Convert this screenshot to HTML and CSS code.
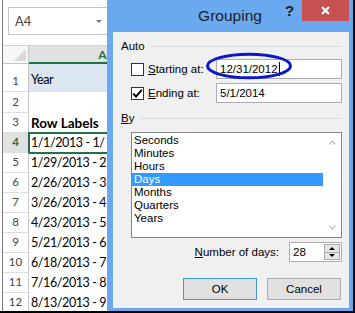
FILE: index.html
```html
<!DOCTYPE html>
<html>
<head>
<meta charset="utf-8">
<link rel="stylesheet" href="styles.css">
</head>
<body>
<div class="screen">
  <div class="sheet">
    <div class="namebar">
      <div class="namebox"><span class="nb-text">A4</span><span class="nb-arrow"></span></div>
    </div>
    <div class="grid">
      <div class="corner"><span class="tri"></span></div>
      <div class="colhead active">A</div>

      <div class="rowhead">1</div><div class="cell blue tall">Year</div>
      <div class="rowhead">2</div><div class="cell"></div>
      <div class="rowhead">3</div><div class="cell bold">Row Labels</div>
      <div class="rowhead active">4</div><div class="cell selected">1/1/2013 - 1/</div>
      <div class="rowhead">5</div><div class="cell">1/29/2013 - 2</div>
      <div class="rowhead">6</div><div class="cell">2/26/2013 - 3</div>
      <div class="rowhead">7</div><div class="cell">3/26/2013 - 4</div>
      <div class="rowhead">8</div><div class="cell">4/23/2013 - 5</div>
      <div class="rowhead">9</div><div class="cell">5/21/2013 - 6</div>
      <div class="rowhead">10</div><div class="cell">6/18/2013 - 7</div>
      <div class="rowhead">11</div><div class="cell">7/16/2013 - 8</div>
      <div class="rowhead">12</div><div class="cell">8/13/2013 - 9</div>
    </div>
  </div>

  <div class="dialog">
    <div class="titlebar">
      <span class="title">Grouping</span>
      <span class="help">?</span>
      <span class="close"><svg width="9" height="9" viewBox="0 0 9 9"><path d="M1 1 L8 8 M8 1 L1 8" stroke="#fff" stroke-width="2.2" fill="none"/></svg></span>
    </div>
    <div class="panel">
      <div class="legend"><span>Auto</span><i class="rule"></i></div>
      <div class="field first">
        <span class="chk"></span>
        <span class="lbl"><u>S</u>tarting at:</span>
        <div class="input">12/31/2012<i class="caret"></i></div>
      </div>
      <div class="field">
        <span class="chk"><svg width="11" height="11" viewBox="0 0 11 11"><path d="M1.2 5.6 L4 8.6 L9.8 1.8" stroke="#000" stroke-width="2" fill="none"/></svg></span>
        <span class="lbl"><u>E</u>nding at:</span>
        <div class="input">5/1/2014</div>
      </div>
      <div class="legend by"><span><u>B</u>y</span><i class="rule"></i></div>
      <div class="listbox">
        <ul class="items">
          <li>Seconds</li>
          <li>Minutes</li>
          <li>Hours</li>
          <li class="sel">Days</li>
          <li>Months</li>
          <li>Quarters</li>
          <li>Years</li>
        </ul>
        <div class="vscroll">
          <svg width="7" height="5" viewBox="0 0 7 5"><path d="M0.5 4.5 L3.5 1 L6.5 4.5" stroke="#c2c2c2" stroke-width="1.3" fill="none"/></svg>
          <svg width="7" height="5" viewBox="0 0 7 5"><path d="M0.5 0.5 L3.5 4 L6.5 0.5" stroke="#c2c2c2" stroke-width="1.3" fill="none"/></svg>
        </div>
      </div>
      <div class="numrow">
        <span class="lbl2"><u>N</u>umber of days:</span>
        <div class="spin">
          <span class="spin-val">28</span>
          <div class="spin-btns">
            <span class="sb"><i class="arr-up"></i></span>
            <span class="sb lower"><i class="arr-down"></i></span>
          </div>
        </div>
      </div>
      <div class="buttons">
        <button class="btn default">OK</button>
        <button class="btn">Cancel</button>
      </div>
      <svg class="ellipse" width="88" height="28" viewBox="0 0 88 28"><ellipse cx="44" cy="14" rx="41.5" ry="11.8" stroke="#0b17c9" stroke-width="3" fill="none"/></svg>
    </div>
  </div>
</div>
</body>
</html>
```

FILE: styles.css
```css
* { box-sizing: border-box; margin: 0; padding: 0; }
body { width: 355px; height: 313px; overflow: hidden; background: #fff; font-family: Lato, "Noto Sans", sans-serif; color: #000; }
.screen { position: relative; width: 355px; height: 313px; border-right: 2px solid #000; border-bottom: 2px solid #000; overflow: hidden; }

/* spreadsheet */
.sheet { margin-left: 2px; width: 106px; border-left: 1px solid #7a7a7a; height: 311px; }
.namebar { height: 45px; padding: 7px 0 0 5px; }
.namebox { width: 101px; height: 28px; border: 1px solid #c6c6c6; display: flex; align-items: center; padding-left: 6px; }
.nb-text { font-size: 13px; color: #444; }
.nb-arrow { margin-left: auto; margin-right: 6px; width: 0; height: 0; border-left: 3px solid transparent; border-right: 3px solid transparent; border-top: 3px solid #777; }

.grid { display: grid; grid-template-columns: 26px 147px; grid-template-rows: 19px 28px 21px repeat(10, 20px); }
.corner { border-top: 1px solid #d5d5d5; border-right: 1px solid #c6c6c6; border-bottom: 1px solid #c6c6c6; background: #f7f7f7; display: flex; justify-content: flex-end; align-items: flex-end; padding: 0 2px 2px 0; }
.tri { width: 0; height: 0; border-left: 12px solid transparent; border-bottom: 12px solid #dadada; }
.colhead { border-top: 1px solid #d5d5d5; border-bottom: 1px solid #c6c6c6; background: #f7f7f7; text-align: center; font-size: 12px; line-height: 17px; color: #444; }
.colhead.active { background: #e1e1e1; color: #217346; font-weight: bold; border-bottom: 2px solid #217346; }

.rowhead { border-right: 1px solid #c6c6c6; border-bottom: 1px solid #dedede; display: flex; justify-content: center; align-items: flex-end; padding-bottom: 3px; font-size: 11.5px; line-height: 14px; color: #444; }
.rowhead.active { background: #e1e1e1; color: #217346; font-weight: bold; }
.cell { display: flex; align-items: flex-end; padding: 0 0 2px 2px; font-size: 12.5px; letter-spacing: -0.4px; line-height: 16px; white-space: nowrap; }
.cell.tall { padding-bottom: 4px; }
.cell.blue { background: #dce6f1; }
.cell.bold { font-weight: bold; font-size: 13.5px; letter-spacing: 0; }
.cell.selected { outline: 2px solid #217346; outline-offset: -1px; }

/* dialog */
.dialog { position: absolute; left: 107px; top: 0; width: 246px; height: 311px; background: #6aa8f0; display: flex; flex-direction: column; font-family: "Liberation Sans", Arial, sans-serif; }
.titlebar { height: 32px; position: relative; display: flex; justify-content: center; align-items: center; flex: none; }
.title { font-size: 15.5px; color: #1e1e1e; }
.help { position: absolute; left: 178px; top: 2px; font-size: 15px; font-weight: bold; color: #222; }
.close { position: absolute; right: 4px; top: 0; width: 47px; height: 21px; background: #c75050; display: flex; align-items: center; justify-content: center; }

.panel { flex: 1; margin: 0 4px 3px 6px; background: #f0f0f0; position: relative; padding: 6px 7px 0 8px; font-size: 11.5px; }
.legend { display: flex; align-items: center; height: 16px; gap: 6px; }
.rule { flex: 1; height: 0; border-top: 1px solid #dcdcdc; }
.legend.by { margin-top: 7px; }
.field { display: flex; align-items: center; height: 20px; margin: 4px 0 0 10px; }
.field.first { margin-top: 5px; }
.chk { width: 13px; height: 13px; border: 1px solid #333; background: #fff; margin-right: 4px; flex: none; display: flex; }
.lbl { width: 68px; flex: none; }
.input { flex: 1; height: 20px; border: 1px solid #abadb3; background: #fff; padding-left: 3px; display: flex; align-items: center; }
.caret { display: inline-block; width: 1px; height: 14px; background: #000; margin-left: 1px; }

.listbox { margin: 6px 0 0 10px; height: 106px; border: 1px solid #828790; background: #fff; display: flex; }
.items { flex: 1; list-style: none; padding-top: 1px; }
.items li { height: 13px; line-height: 13px; padding-left: 2px; }
.items li.sel { background: #3399ff; color: #fff; }
.vscroll { width: 18px; display: flex; flex-direction: column; justify-content: space-between; align-items: center; padding: 7px 0 7px; }

.numrow { display: flex; justify-content: flex-end; align-items: center; gap: 10px; margin-top: 4px; height: 20px; }
.spin { width: 53px; height: 20px; border: 1px solid #abadb3; background: #fff; display: flex; align-items: center; padding-left: 3px; }
.spin-val { flex: 1; }
.spin-btns { width: 16px; height: 16px; margin-right: 1px; display: flex; flex-direction: column; border: 1px solid #acacac; background: #e5e5e5; }
.sb { flex: 1; display: flex; align-items: center; justify-content: center; }
.sb.lower { border-top: 1px solid #acacac; }
.arr-up { width: 0; height: 0; border-left: 3px solid transparent; border-right: 3px solid transparent; border-bottom: 3px solid #000; }
.arr-down { width: 0; height: 0; border-left: 3px solid transparent; border-right: 3px solid transparent; border-top: 3px solid #000; }

.buttons { display: flex; justify-content: flex-end; gap: 10px; margin-top: 16px; padding-right: 1px; }
.btn { width: 74px; height: 22px; border: 1px solid #adadad; background: #e1e1e1; font-family: inherit; font-size: 11.5px; color: #000; }
.btn.default { border-color: #3c96e8; }

.ellipse { position: absolute; left: 92px; top: 20px; }
```
